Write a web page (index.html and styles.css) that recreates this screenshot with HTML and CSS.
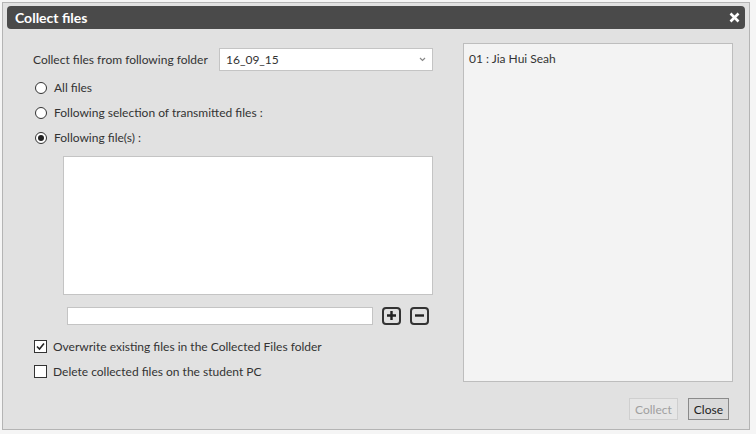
FILE: index.html
```html
<!DOCTYPE html>
<html lang="en">
<head>
  <meta charset="UTF-8">
  <title>Collect files</title>
  <link rel="stylesheet" href="styles.css">
</head>
<body>
  <!-- Collect files dialog -->
  <div class="dialog">
    <div class="titlebar">
      <span class="title">Collect files</span>
      <svg class="close-x" width="11" height="11" viewBox="0 0 11 11"><path d="M1.5 1.5 L9.5 9.5 M9.5 1.5 L1.5 9.5" stroke="#fff" stroke-width="2.6"/></svg>
    </div>

    <div class="dialog-body">
      <!-- Left column: options -->
      <div class="options">
        <div class="folder-row">
          <span class="folder-label">Collect files from following folder</span>
          <div class="select">
            <span>16_09_15</span>
            <svg class="chevron" width="7" height="5" viewBox="0 0 7 5"><path d="M1 1 L3.5 3.5 L6 1" fill="none" stroke="#888" stroke-width="1.2"/></svg>
          </div>
        </div>

        <label class="radio-row"><span class="radio"></span>All files</label>
        <label class="radio-row"><span class="radio"></span>Following selection of transmitted files :</label>
        <label class="radio-row"><span class="radio checked"></span>Following file(s) :</label>

        <div class="file-list"></div>

        <div class="add-row">
          <div class="text-input"></div>
          <span class="icon-btn">
            <svg width="13" height="13" viewBox="0 0 13 13"><path d="M6.5 2 V11 M2 6.5 H11" stroke="#222" stroke-width="2.4"/></svg>
          </span>
          <span class="icon-btn">
            <svg width="13" height="13" viewBox="0 0 13 13"><path d="M2 6.5 H11" stroke="#222" stroke-width="2.4"/></svg>
          </span>
        </div>

        <label class="check-row first"><span class="checkbox">
          <svg width="11" height="11" viewBox="0 0 11 11"><path d="M2 5.5 L4.5 8 L9 2.5" fill="none" stroke="#222" stroke-width="1.6"/></svg>
        </span>Overwrite existing files in the Collected Files folder</label>
        <label class="check-row"><span class="checkbox"></span>Delete collected files on the student PC</label>
      </div>

      <!-- Right column: students -->
      <div class="right-col">
        <div class="student-list">
          <div class="student">01 : Jia Hui Seah</div>
        </div>
        <div class="buttons">
          <button class="btn disabled">Collect</button>
          <button class="btn">Close</button>
        </div>
      </div>
    </div>
  </div>
</body>
</html>
```

FILE: styles.css
```css
/* Page behind the dialog */
body {
    margin: 0;
    background-color: #f5f5f5;
    font-family: Lato, "Noto Sans", sans-serif;
    font-size: 12px;
    color: #333;
}

/* Dialog frame */
.dialog {
    margin: 2px 0 0 2px;
    width: 748px;
    height: 428px;
    border: 1px solid #b4b4b4;
    background-color: #e1e1e1;
    padding: 3px 4px 0 4px;
    box-sizing: border-box;
}

.titlebar {
    height: 23px;
    border-radius: 4px;
    background-color: #4a4a4a;
    color: #fff;
    display: flex;
    align-items: center;
    justify-content: space-between;
    padding: 0 5px 0 8px;
}

.title {
    font-weight: bold;
    font-size: 14px;
}

.dialog-body {
    display: flex;
    padding: 14px 0 0 26px;
}

/* Left column */
.options {
    width: 400px;
    display: flex;
    flex-direction: column;
    padding-top: 5px;
}

.folder-row {
    display: flex;
    align-items: center;
    height: 23px;
}

.folder-label {
    width: 186px;
    flex: none;
    white-space: nowrap;
}

.select {
    width: 214px;
    height: 23px;
    box-sizing: border-box;
    border: 1px solid #c4c4c4;
    background-color: #fff;
    display: flex;
    align-items: center;
    justify-content: space-between;
    padding: 0 6px 0 6px;
}

.radio-row,
.check-row {
    display: flex;
    align-items: center;
    height: 25px;
    white-space: nowrap;
}

.radio-row:first-of-type {
    margin-top: 4px;
}

.radio {
    width: 10px;
    height: 10px;
    border: 1px solid #333;
    border-radius: 50%;
    background-color: #fff;
    margin: 0 7px 0 2px;
    position: relative;
}

.radio.checked::after {
    content: "";
    position: absolute;
    left: 2px;
    top: 2px;
    width: 6px;
    height: 6px;
    border-radius: 50%;
    background-color: #222;
}

.file-list {
    margin: 6px 0 0 30px;
    width: 370px;
    height: 139px;
    box-sizing: border-box;
    border: 1px solid #c4c4c4;
    background-color: #fff;
}

.add-row {
    display: flex;
    align-items: center;
    gap: 9px;
    margin: 11px 0 0 34px;
    height: 19px;
}

.text-input {
    flex: none;
    width: 306px;
    height: 18px;
    box-sizing: border-box;
    border: 1px solid #c4c4c4;
    background-color: #fff;
}

.icon-btn {
    flex: none;
    width: 19px;
    height: 18px;
    box-sizing: border-box;
    border: 2px solid #333;
    border-radius: 4px;
    display: flex;
    align-items: center;
    justify-content: center;
}

.check-row.first {
    margin-top: 9px;
}

.checkbox {
    width: 13px;
    height: 13px;
    box-sizing: border-box;
    border: 1px solid #333;
    background-color: #fff;
    margin: 0 6px 0 1px;
    display: flex;
    align-items: center;
    justify-content: center;
}

/* Right column */
.right-col {
    margin-left: 30px;
    display: flex;
    flex-direction: column;
}

.student-list {
    width: 270px;
    height: 339px;
    box-sizing: border-box;
    border: 1px solid #bdbdbd;
    background-color: #f3f3f3;
    padding: 7px 5px;
}

.buttons {
    display: flex;
    justify-content: flex-end;
    gap: 10px;
    margin-top: 16px;
    padding-right: 4px;
}

.btn {
    font-family: inherit;
    font-size: 12px;
    height: 22px;
    padding: 0 5px;
    border: 1px solid #8a8a8a;
    background-color: #dadada;
    color: #222;
}

.btn.disabled {
    border-color: #cfcfcf;
    background-color: #e6e6e6;
    color: #a0a0a0;
}
```
